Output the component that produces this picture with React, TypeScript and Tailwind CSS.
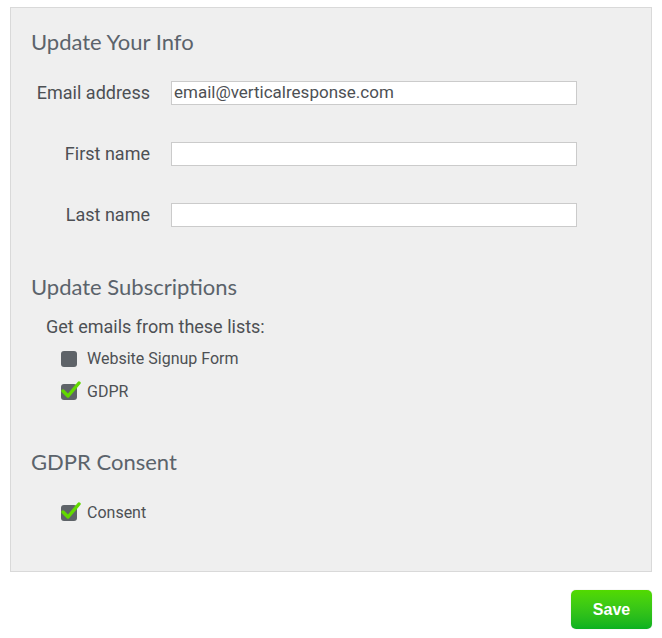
import { ReactNode } from 'react';

const heading = "text-[22px] text-[#5b636b] font-['Lato',sans-serif]";
const body = "font-['Roboto',sans-serif]";

function Field({ label, value = '' }: { label: string; value?: string }) {
  return (
    <div className="flex items-center h-[24px]">
      <label className={`${body} w-[119px] -mt-[2px] text-right text-[18px] text-[#4d5054]`}>{label}</label>
      <input
        readOnly
        value={value}
        className={`${body} ml-[21px] w-[406px] h-[24px] bg-white border border-[#cbcbcb] px-[2px] text-[17px] text-[#4d5054] outline-none`}
      />
    </div>
  );
}

function Check({ checked, children }: { checked?: boolean; children: ReactNode }) {
  return (
    <div className="flex items-center h-[18px] pl-[30px]">
      <span className="relative w-[16px] h-[16px] rounded-[3px] bg-[#5e6368]">
        {checked && (
          <svg viewBox="0 0 20 20" className="absolute left-[0px] top-[-4px] w-[20px] h-[20px]">
            <path d="M2 11 L7 16 L18 3" fill="none" stroke="#62d800" strokeWidth="3.4" strokeLinecap="round" strokeLinejoin="round" />
          </svg>
        )}
      </span>
      <span className={`${body} ml-[10px] text-[16px] text-[#4d5054]`}>{children}</span>
    </div>
  );
}

export default function App() {
  return (
    <div className="w-[662px] h-[638px] bg-white pt-[7px] px-[10px]">
      <div className="h-[565px] bg-[#efefef] border border-[#d9d9d9] pl-[20px] pt-[24px]">
        <h2 className={`${heading} leading-[20px]`}>Update Your Info</h2>
        <div className="mt-[29px] flex flex-col gap-[37px]">
          <Field label="Email address" value="email@verticalresponse.com" />
          <Field label="First name" />
          <Field label="Last name" />
        </div>
        <h2 className={`${heading} leading-[20px] mt-[50px]`}>Update Subscriptions</h2>
        <p className={`${body} mt-[21px] ml-[15px] text-[18px] leading-[18px] text-[#4d5054]`}>Get emails from these lists:</p>
        <div className="mt-[14px] flex flex-col gap-[15px]">
          <Check>Website Signup Form</Check>
          <Check checked>GDPR</Check>
        </div>
        <h2 className={`${heading} leading-[20px] mt-[51px]`}>GDPR Consent</h2>
        <div className="mt-[32px]">
          <Check checked>Consent</Check>
        </div>
      </div>
      <div className="flex justify-end mt-[18px]">
        <button className="w-[81px] h-[39px] rounded-[5px] bg-gradient-to-b from-[#52da00] to-[#08b120] text-white font-bold text-[16px] font-['Liberation_Sans',sans-serif] shadow-[0_0_1px_rgba(0,0,0,0.3)]">
          Save
        </button>
      </div>
    </div>
  );
}
